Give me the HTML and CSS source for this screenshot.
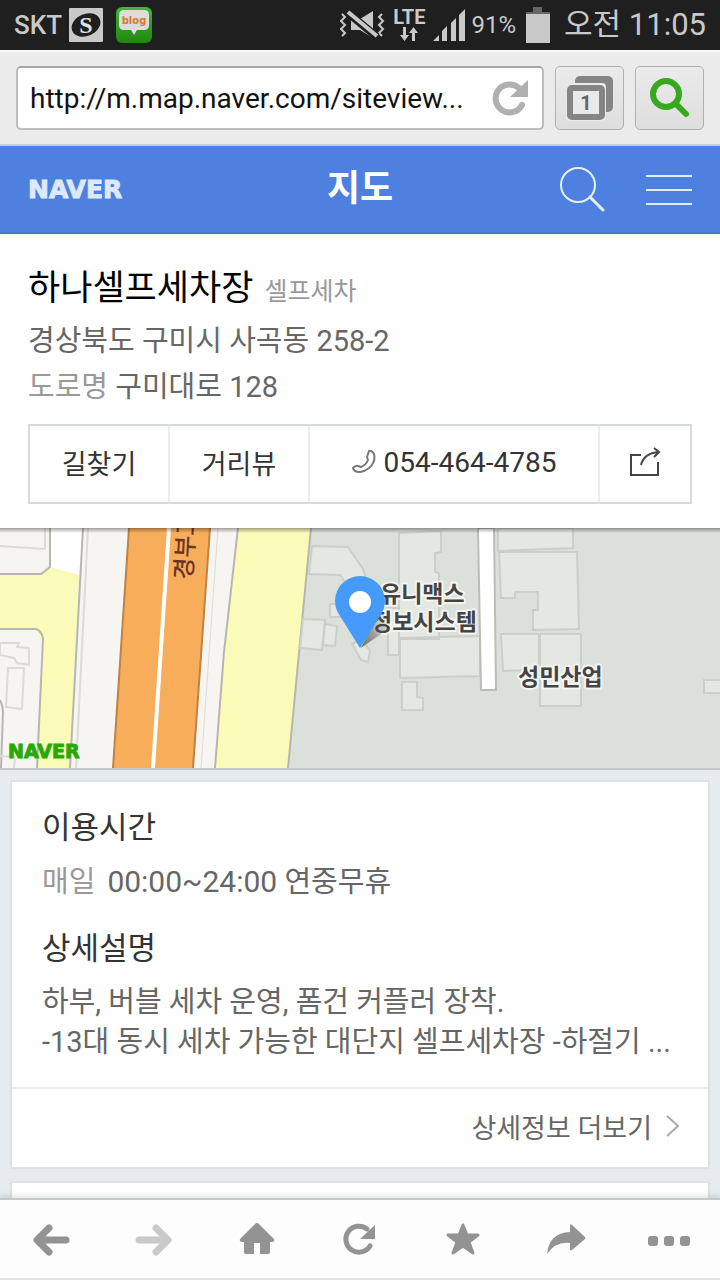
FILE: index.html
```html
<!DOCTYPE html>
<html lang="ko">
<head>
    <meta charset="UTF-8">
    <meta name="viewport" content="width=device-width, initial-scale=1.0">
    <title>하나셀프세차장 - 지도</title>
    <link rel="stylesheet" href="styles.css">
</head>
<body>
    <!-- Phone status bar -->
    <div class="status-bar">
        <div class="status-left">
            <span class="carrier">SKT</span>
            <svg width="34" height="34" viewBox="0 0 34 34">
                <rect width="34" height="34" rx="1" fill="#c9c9c9"/>
                <ellipse cx="17" cy="17" rx="15" ry="11" transform="rotate(-24 17 17)" fill="#1f1f1f"/>
                <text class="s-mark" x="17" y="25" text-anchor="middle">S</text>
            </svg>
            <svg class="blog-icon" width="36" height="36" viewBox="0 0 36 36">
                <defs>
                    <linearGradient id="blogGreen" x1="0" y1="0" x2="0" y2="1">
                        <stop offset="0" stop-color="#3db93a"/>
                        <stop offset="1" stop-color="#22850f"/>
                    </linearGradient>
                </defs>
                <rect width="36" height="36" rx="6" fill="url(#blogGreen)"/>
                <path d="M8 3h20q5 0 5 5v10q0 5-5 5h-7l-3 5-3-5H8q-5 0-5-5V8q0-5 5-5z" fill="#dcdcdc"/>
                <text class="blog-mark" x="18" y="17" text-anchor="middle">blog</text>
            </svg>
        </div>
        <div class="status-right">
            <svg width="46" height="32" viewBox="0 0 46 32" fill="none" stroke="#c9c9c9" stroke-width="2">
                <path d="M2 5l3 3-4 4 4 4-4 4 4 4-3 3M42 5l-3 3 4 4-4 4 4 4-4 4 3 3"/>
                <path d="M11 10h9L33 2v27l-13-8h-9z" fill="#c9c9c9" stroke="none"/>
                <path d="M7 3l30 25" stroke="#1f1f1f" stroke-width="8"/>
                <path d="M8 3l29 24" stroke-width="4"/>
            </svg>
            <div class="lte">
                <span>LTE</span>
                <svg width="20" height="14" viewBox="0 0 20 14" fill="#c9c9c9">
                    <path d="M4 0h3v8h3l-4.500 6L1 8h3zM13 14h3V6h3l-4.500-6L10 6h3z"/>
                </svg>
            </div>
            <svg width="32" height="32" viewBox="0 0 32 32" fill="#c9c9c9">
                <path d="M0 32l6-6v6zM9 32V22l5-5v15zM18 32V14l5-5v23zM26 32V6l6-6v32z"/>
            </svg>
            <span class="percent">91%</span>
            <svg class="battery" width="26" height="36" viewBox="0 0 26 36">
                <path d="M8 0h9v5h8v4H1V5h7z" fill="#666"/>
                <path d="M1 7h24v29H1z" fill="#c9c9c9"/>
            </svg>
            <span class="clock">오전 11:05</span>
        </div>
    </div>

    <!-- Browser address bar -->
    <div class="browser-bar">
        <div class="url-box">
            <input class="url-input" type="text" value="http://m.map.naver.com/siteview..." aria-label="주소">
            <button class="reload" aria-label="새로고침">
                <svg width="36" height="36" viewBox="0 0 36 36">
                    <path d="M27 8A14 14 0 1 0 30 25" fill="none" stroke="#b0b0b0" stroke-width="6" stroke-linecap="round"/>
                    <path d="M36 0v17H18z" fill="#b0b0b0"/>
                </svg>
            </button>
        </div>
        <button class="bar-button" aria-label="탭">
            <svg width="48" height="46" viewBox="0 0 48 46">
                <rect x="9" y="1" width="38" height="36" rx="5" fill="#858585"/>
                <rect x="0" y="8" width="40" height="38" rx="4" fill="#e9e9e9"/>
                <rect x="4" y="13" width="32" height="29" rx="2" fill="#e9e9e9" stroke="#858585" stroke-width="6"/>
                <text class="tab-count" x="20" y="35" text-anchor="middle">1</text>
            </svg>
        </button>
        <button class="bar-button" aria-label="검색">
            <svg width="42" height="42" viewBox="0 0 42 42" fill="none" stroke="#38a81c">
                <circle cx="17" cy="17" r="13" stroke-width="6"/>
                <path d="M27 27l10 10" stroke-width="6" stroke-linecap="round"/>
            </svg>
        </button>
    </div>

    <!-- Map service header -->
    <header class="header">
        <a class="logo" href="#">NAVER</a>
        <h1>지도</h1>
        <div class="header-actions">
            <button aria-label="검색">
                <svg width="46" height="46" viewBox="0 0 46 46" fill="none" stroke="#e6f1ff">
                    <circle cx="18" cy="19" r="17" stroke-width="2"/>
                    <path d="M30 31l13 13" stroke-width="3" stroke-linecap="round"/>
                </svg>
            </button>
            <button aria-label="메뉴">
                <svg width="46" height="46" viewBox="0 0 46 46" stroke="#dfeefa" stroke-width="2">
                    <path d="M0 10h46M0 24h46M0 38h46"/>
                </svg>
            </button>
        </div>
    </header>

    <main class="content">
        <section class="place">
            <div class="place-name">
                <h2>하나셀프세차장</h2>
                <span class="category">셀프세차</span>
            </div>
            <p class="address">경상북도 구미시 사곡동 258-2</p>
            <p class="address"><span class="label">도로명</span> 구미대로 128</p>
            <div class="actions">
                <a href="#">길찾기</a>
                <a href="#">거리뷰</a>
                <a class="phone" href="#">
                    <svg width="24" height="24" viewBox="0 0 24 24" fill="none" stroke="#777" stroke-width="2" stroke-linejoin="round">
                        <path d="M17 1q3-1 5 3 2 8-5 14-8 6-14 3-2-2-2-3 3-3 5-2l3 1q5-2 7-7l-1-3z"/>
                    </svg>
                    054-464-4785
                </a>
                <button aria-label="공유">
                    <svg width="32" height="30" viewBox="0 0 32 30" fill="none" stroke="#444" stroke-width="2">
                        <path d="M12 8H2v20h27V15"/>
                        <path d="M12 18q3-12 18-13M25 1l5 4-5 5"/>
                    </svg>
                </button>
            </div>
        </section>

        <div class="map">
            <svg viewBox="0 0 720 240" preserveAspectRatio="xMidYMid slice">
                <defs>
                    <linearGradient id="mapShade" x1="0" y1="0" x2="0" y2="1">
                        <stop offset="0" stop-color="#000" stop-opacity=".35"/>
                        <stop offset="1" stop-color="#000" stop-opacity="0"/>
                    </linearGradient>
                    <linearGradient id="pinShade" x1="0" y1="1" x2="1" y2="0">
                        <stop offset="0" stop-color="#555" stop-opacity=".8"/>
                        <stop offset="1" stop-color="#555" stop-opacity="0"/>
                    </linearGradient>
                </defs>
                <rect width="720" height="240" fill="#dbe0da"/>
                <path d="M0 0h311L288 240H0z" fill="#f6f5f1"/>

                <!-- west side streets -->
                <path d="M50 0h33l-4 48-30-7z" fill="#fff"/>
                <path d="M0 46h40l10-7 29 8-9 193H37l5-120q0-12-8-18H0z" fill="#fafab9"/>
                <g fill="none" stroke="#b8b6b0" stroke-width="2">
                    <path d="M50 0v39l-9 7H0M0 101h36q6 2 7 10l-6 129M83 0l-13 240M0 172q3 6 3 12l-2 56"/>
                </g>
                <g fill="#f6f5f1" stroke="#dcdbd6" stroke-width="2">
                    <path d="M0 18l45 3V0M0 115h19l-2 4 12 1v17l-12-2-3-5-14-3zM8 140h16l-2 41-16-2z"/>
                    <path d="M88 0L76 240M0 228l15 1-1 11" fill="none"/>
                </g>

                <!-- expressway -->
                <path d="M129 0h81l-17 240H113z" fill="#f8ad5b"/>
                <path d="M129 0l-16 240M210 0l-17 240" stroke="#bd8345" stroke-width="2"/>
                <path d="M169 0l-16 240" stroke="#fff" stroke-width="4"/>
                <path d="M218 0l-17 240" stroke="#dcdbd6" stroke-width="1"/>

                <path d="M238 0h73l-23 240h-73l9-116z" fill="#fafab9"/>
                <path d="M238 0l-14 124-9 116M311 0l-23 240" fill="none" stroke="#b8b6b0" stroke-width="2"/>

                <!-- buildings -->
                <g fill="#e5e7e2" stroke="#cbcfca" stroke-width="2">
                    <path d="M312 18l36 1 15 22 5 15-20 2-8-11-31-1zM330 76h14v13h-14zM303 91l22 1-3 30-22-2zM325 96l12 2-2 20-12-1zM352 116l8-4 10 10-2 12-7-2z"/>
                    <path d="M399 5l42-2v21l-6 1v19l4 1v66h-40zM388 80h11v47h-11zM400 110l80-2v40l-80 2zM402 154h15v15l6 1v12h-21z"/>
                    <path d="M498 0h75v20l-75 3zM499 24h78l2 77-46 1V82h5V64h-23v6h-14zM501 106h38v36l-36 1zM540 106h41v72h-41zM704 152h20v13h-20z"/>
                </g>
                <path d="M478 0h16l2 162h-15z" fill="#fff" stroke="#bdbdb8" stroke-width="2"/>

                <g class="map-label">
                    <text x="380" y="74">유니맥스</text>
                    <text x="371" y="102">정보시스템</text>
                    <text x="518" y="157">성민산업</text>
                </g>
                <text class="road-label" transform="translate(192 52) rotate(-87)">경부고</text>
                <text class="map-logo" x="8" y="230">NAVER</text>

                <!-- marker -->
                <path d="M361 120l27-19-8-20z" fill="url(#pinShade)"/>
                <path d="M360 120L340 88q-5-7-5-15a25 25 0 0 1 50 0q0 8-5 15z" fill="#459afa"/>
                <circle cx="360" cy="74" r="11" fill="#fff"/>
                <rect width="720" height="5" fill="url(#mapShade)"/>
            </svg>
        </div>

        <section class="card">
            <div class="card-body">
                <h3>이용시간</h3>
                <p class="hours"><span class="label">매일</span><span class="time">00:00~24:00</span> 연중무휴</p>
                <h3>상세설명</h3>
                <p class="description">하부, 버블 세차 운영, 폼건 커플러 장착.<br>-13대 동시 세차 가능한 대단지 셀프세차장 -하절기 ...</p>
            </div>
            <a class="more" href="#">
                상세정보 더보기
                <svg width="14" height="24" viewBox="0 0 14 24" fill="none" stroke="#aaa" stroke-width="2">
                    <path d="M1 2l11 10L1 22"/>
                </svg>
            </a>
        </section>
        <section class="card next-card"></section>
    </main>

    <!-- Browser toolbar -->
    <nav class="toolbar">
        <button aria-label="뒤로">
            <svg width="40" height="40" viewBox="0 0 40 40" fill="none" stroke="#939393" stroke-width="7" stroke-linecap="round" stroke-linejoin="round">
                <path d="M18 9L6 21l12 12M7 21h28"/>
            </svg>
        </button>
        <button aria-label="앞으로">
            <svg width="40" height="40" viewBox="0 0 40 40" fill="none" stroke="#cacaca" stroke-width="7" stroke-linecap="round" stroke-linejoin="round">
                <path d="M22 9l12 12-12 12M33 21H5"/>
            </svg>
        </button>
        <button aria-label="홈">
            <svg width="40" height="40" viewBox="0 0 40 40" fill="#939393">
                <path d="M20 4q1 0 2 1l15 15q1 3-2 3h-2v10q0 2-2 2h-8V24h-6v11H9q-2 0-2-2V23H5q-3 0-2-3L18 5q1-1 2-1z"/>
            </svg>
        </button>
        <button aria-label="새로고침">
            <svg width="40" height="40" viewBox="0 0 40 40">
                <path d="M27 10A13 13 0 1 0 30 27" fill="none" stroke="#939393" stroke-width="5" stroke-linecap="round"/>
                <path d="M35 6v14H20z" fill="#939393"/>
            </svg>
        </button>
        <button aria-label="즐겨찾기">
            <svg width="40" height="40" viewBox="0 0 40 40" fill="#939393" stroke="#939393" stroke-width="3" stroke-linejoin="round">
                <path d="M20 6l4 10h11l-9 7 4 11-10-7-10 7 4-11-9-7h11z"/>
            </svg>
        </button>
        <button aria-label="공유">
            <svg width="40" height="40" viewBox="0 0 40 40" fill="#939393">
                <path d="M1 35Q3 14 24 13V7q0-3 2-1l13 12q1 1 0 2L26 31q-2 1-2-1v-6Q10 22 1 35z"/>
            </svg>
        </button>
        <button aria-label="더보기">
            <svg width="44" height="40" viewBox="0 0 44 40" fill="#939393">
                <rect x="1" y="17" width="10" height="10" rx="3"/>
                <rect x="17" y="17" width="10" height="10" rx="3"/>
                <rect x="33" y="17" width="10" height="10" rx="3"/>
            </svg>
        </button>
    </nav>
</body>
</html>
```
FILE: styles.css
```css
*, *::before, *::after {
    box-sizing: border-box;
}

body {
    font-family: Roboto, 'Noto Sans CJK KR', sans-serif;
    margin: 0;
    height: 100vh;
    display: flex;
    flex-direction: column;
    background: #e7ebee;
    color: #666;
    overflow: hidden;
}

h1, h2, h3, p {
    margin: 0;
    font-weight: 400;
}

a {
    color: inherit;
    text-decoration: none;
}

button {
    display: flex;
    align-items: center;
    justify-content: center;
    padding: 0;
    border: none;
    background: none;
    cursor: pointer;
}

svg {
    display: block;
    flex-shrink: 0;
}

/* Status bar */
.status-bar {
    flex-shrink: 0;
    display: flex;
    align-items: center;
    justify-content: space-between;
    height: 50px;
    padding: 0 14px;
    background: #1f1f1f;
    color: #c9c9c9;
}

.status-left, .status-right {
    display: flex;
    align-items: center;
    gap: 7px;
}

.carrier {
    font-size: 26px;
    font-weight: 500;
}

.s-mark {
    font-family: 'Liberation Serif', serif;
    font-size: 24px;
    font-weight: 700;
    fill: #e0e0e0;
}

.blog-icon {
    margin-left: 6px;
}

.blog-mark {
    font-family: 'DejaVu Sans', sans-serif;
    font-size: 10px;
    font-weight: 700;
    fill: #d9772b;
}

.lte {
    display: flex;
    flex-direction: column;
    align-items: center;
    font-size: 20px;
    font-weight: 700;
    line-height: 16px;
    gap: 2px;
}

.percent {
    font-size: 24px;
}

.battery {
    margin: 0 6px 0 2px;
}

.clock {
    font-size: 31px;
    line-height: 48px;
}

/* Address bar */
.browser-bar {
    flex-shrink: 0;
    display: flex;
    align-items: center;
    gap: 11px;
    height: 96px;
    padding: 0 16px;
    background: #ebebeb;
    border-top: 2px solid #f8f8f8;
    border-bottom: 2px solid #c9ced8;
}

.url-box {
    flex: 1;
    min-width: 0;
    display: flex;
    align-items: center;
    height: 64px;
    padding: 0 14px 0 12px;
    background: #fff;
    border: 2px solid #bcbcbc;
    border-top-color: #a8a8a8;
    border-radius: 5px;
}

.url-input {
    flex: 1;
    min-width: 0;
    padding: 0;
    border: none;
    outline: none;
    background: none;
    font: 28px Roboto, sans-serif;
    color: #111;
}

.bar-button {
    width: 69px;
    height: 64px;
    background: linear-gradient(#ebebeb, #dedede);
    border: 1px solid #b0b0b0;
    border-radius: 5px;
}

.tab-count {
    font: 700 20px Roboto, sans-serif;
    fill: #666;
}

/* Header */
.header {
    flex-shrink: 0;
    display: grid;
    grid-template-columns: 1fr auto 1fr;
    align-items: center;
    height: 88px;
    padding: 0 28px;
    background: #4e80e0;
    border-bottom: 2px solid #4874c6;
}

.logo {
    font-family: 'DejaVu Sans', sans-serif;
    font-size: 25px;
    font-weight: 700;
    -webkit-text-stroke: 1px #dce9ff;
    color: #dce9ff;
}

.header h1 {
    font-size: 36px;
    font-weight: 700;
    line-height: 52px;
    color: #fff;
}

.header-actions {
    display: flex;
    justify-content: flex-end;
    gap: 40px;
}

/* Place summary */
.content {
    flex: 1;
    min-height: 0;
    overflow: hidden;
}

.place {
    padding: 26px 28px 24px;
    background: #fff;
}

.place-name {
    display: flex;
    align-items: baseline;
    gap: 11px;
}

.place-name h2 {
    font-size: 35px;
    line-height: 58px;
    color: #000;
}

.category {
    font-size: 25px;
    line-height: 40px;
    color: #999;
}

.address {
    font-size: 29px;
    line-height: 46px;
}

.label {
    color: #999;
}

.actions {
    display: grid;
    grid-template-columns: 138px 140px 1fr 92px;
    height: 80px;
    margin-top: 14px;
    border: 2px solid #d7dadb;
    color: #333;
    font-size: 27px;
}

.actions > * {
    display: flex;
    align-items: center;
    justify-content: center;
    gap: 8px;
    padding-bottom: 4px;
}

.actions > * + * {
    border-left: 2px solid #ececec;
}

.actions .phone {
    font-size: 28px;
}

/* Map */
.map {
    border-bottom: 2px solid #c3c8ca;
}

.map svg {
    width: 100%;
    height: 240px;
}

.map-label {
    font-size: 23px;
    font-weight: 700;
    fill: #444;
    stroke: #f4f4f0;
    stroke-width: 4px;
    stroke-linejoin: round;
    paint-order: stroke;
}

.road-label {
    font-size: 24px;
    font-weight: 500;
    fill: #6b3526;
}

.map-logo {
    font-family: 'DejaVu Sans', sans-serif;
    font-size: 19px;
    font-weight: 700;
    fill: #26a900;
    stroke: #26a900;
    stroke-width: 1px;
}

/* Detail cards */
.card {
    margin: 10px 10px 12px;
    background: #fff;
    border: 2px solid #dfe2e4;
}

.card-body {
    padding: 26px 30px 25px;
}

.card h3 {
    font-size: 31px;
    line-height: 40px;
    color: #333;
}

.hours {
    margin: 14px 0 27px;
    font-size: 29px;
    line-height: 40px;
}

.hours .label {
    margin-right: 12px;
}

.time {
    font-size: 30px;
}

.description {
    margin-top: 13px;
    font-size: 29px;
    line-height: 40px;
    white-space: nowrap;
    overflow: hidden;
}

.more {
    display: flex;
    align-items: center;
    justify-content: flex-end;
    gap: 14px;
    height: 80px;
    padding: 0 28px 4px;
    border-top: 2px solid #ececec;
    font-size: 27px;
}

.next-card {
    height: 200px;
}

/* Bottom toolbar */
.toolbar {
    flex-shrink: 0;
    position: relative;
    display: flex;
    height: 82px;
    background: #fdfdfd;
    border-top: 2px solid #c4c8c8;
    border-bottom: 2px solid #e4e4e4;
    box-shadow: 0 -2px 6px rgba(0, 0, 0, 0.12);
}

.toolbar button {
    flex: 1;
}
```
